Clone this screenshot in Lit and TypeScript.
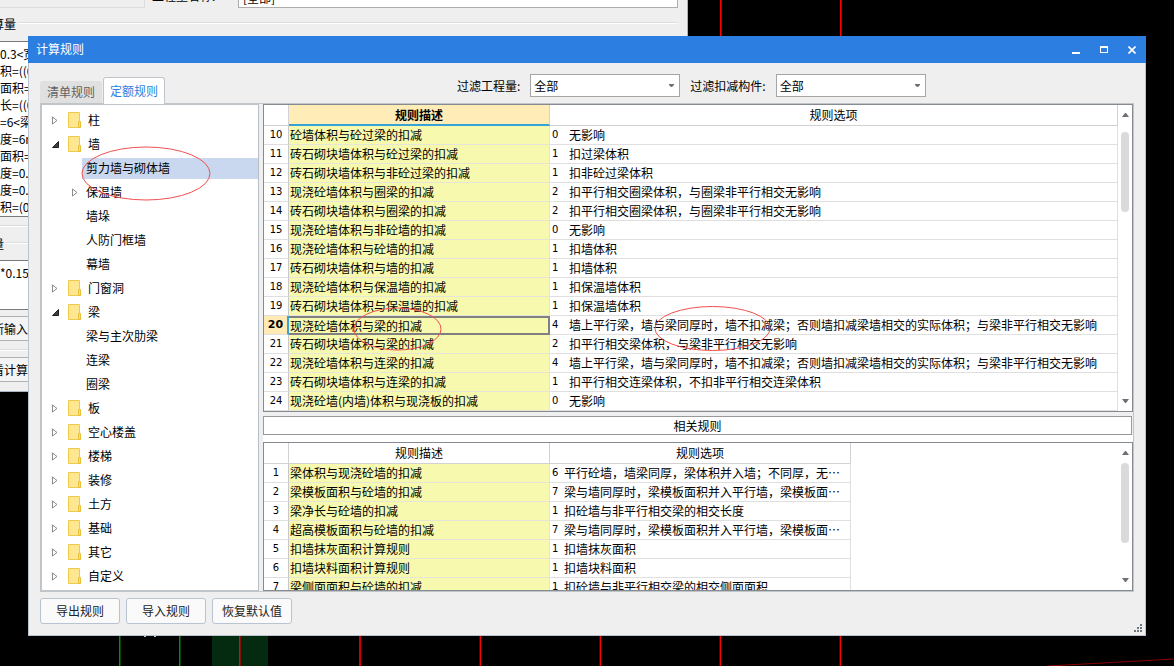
import { LitElement, html, css, svg, nothing } from "lit";
import { customElement, property } from "lit/decorators.js";
import { classMap } from "lit/directives/class-map.js";

interface TreeNode {
  text: string;
  level: 1 | 2;
  state?: "open" | "closed";
  selected?: boolean;
}

interface Rule {
  no: number;
  desc: string;
  code: number;
  option: string;
}

const TREE: TreeNode[] = [
  { text: "柱", level: 1, state: "closed" },
  { text: "墙", level: 1, state: "open" },
  { text: "剪力墙与砌体墙", level: 2, selected: true },
  { text: "保温墙", level: 2, state: "closed" },
  { text: "墙垛", level: 2 },
  { text: "人防门框墙", level: 2 },
  { text: "幕墙", level: 2 },
  { text: "门窗洞", level: 1, state: "closed" },
  { text: "梁", level: 1, state: "open" },
  { text: "梁与主次肋梁", level: 2 },
  { text: "连梁", level: 2 },
  { text: "圈梁", level: 2 },
  { text: "板", level: 1, state: "closed" },
  { text: "空心楼盖", level: 1, state: "closed" },
  { text: "楼梯", level: 1, state: "closed" },
  { text: "装修", level: 1, state: "closed" },
  { text: "土方", level: 1, state: "closed" },
  { text: "基础", level: 1, state: "closed" },
  { text: "其它", level: 1, state: "closed" },
  { text: "自定义", level: 1, state: "closed" },
];

const LONG_BEAM =
  "墙上平行梁，墙与梁同厚时，墙不扣减梁；否则墙扣减梁墙相交的实际体积；与梁非平行相交无影响";

const RULES: Rule[] = [
  { no: 10, desc: "砼墙体积与砼过梁的扣减", code: 0, option: "无影响" },
  { no: 11, desc: "砖石砌块墙体积与砼过梁的扣减", code: 1, option: "扣过梁体积" },
  { no: 12, desc: "砖石砌块墙体积与非砼过梁的扣减", code: 1, option: "扣非砼过梁体积" },
  { no: 13, desc: "现浇砼墙体积与圈梁的扣减", code: 2, option: "扣平行相交圈梁体积，与圈梁非平行相交无影响" },
  { no: 14, desc: "砖石砌块墙体积与圈梁的扣减", code: 2, option: "扣平行相交圈梁体积，与圈梁非平行相交无影响" },
  { no: 15, desc: "现浇砼墙体积与非砼墙的扣减", code: 0, option: "无影响" },
  { no: 16, desc: "现浇砼墙体积与砼墙的扣减", code: 1, option: "扣墙体积" },
  { no: 17, desc: "砖石砌块墙体积与墙的扣减", code: 1, option: "扣墙体积" },
  { no: 18, desc: "现浇砼墙体积与保温墙的扣减", code: 1, option: "扣保温墙体积" },
  { no: 19, desc: "砖石砌块墙体积与保温墙的扣减", code: 1, option: "扣保温墙体积" },
  { no: 20, desc: "现浇砼墙体积与梁的扣减", code: 4, option: LONG_BEAM },
  { no: 21, desc: "砖石砌块墙体积与梁的扣减", code: 2, option: "扣平行相交梁体积，与梁非平行相交无影响" },
  { no: 22, desc: "现浇砼墙体积与连梁的扣减", code: 4, option: LONG_BEAM },
  { no: 23, desc: "砖石砌块墙体积与连梁的扣减", code: 1, option: "扣平行相交连梁体积，不扣非平行相交连梁体积" },
  { no: 24, desc: "现浇砼墙(内墙)体积与现浇板的扣减", code: 0, option: "无影响" },
];

const RELATED: Rule[] = [
  { no: 1, desc: "梁体积与现浇砼墙的扣减", code: 6, option: "平行砼墙，墙梁同厚，梁体积并入墙；不同厚，无…" },
  { no: 2, desc: "梁模板面积与砼墙的扣减", code: 7, option: "梁与墙同厚时，梁模板面积并入平行墙，梁模板面…" },
  { no: 3, desc: "梁净长与砼墙的扣减", code: 1, option: "扣砼墙与非平行相交梁的相交长度" },
  { no: 4, desc: "超高模板面积与砼墙的扣减", code: 7, option: "梁与墙同厚时，梁模板面积并入平行墙，梁模板面…" },
  { no: 5, desc: "扣墙抹灰面积计算规则", code: 1, option: "扣墙抹灰面积" },
  { no: 6, desc: "扣墙块料面积计算规则", code: 1, option: "扣墙块料面积" },
  { no: 7, desc: "梁侧面面积与砼墙的扣减", code: 1, option: "扣砼墙与非平行相交梁的相交侧面面积" },
];

/* Drawing canvas with the axis lines of the plan. */
@customElement("plan-canvas")
export class PlanCanvas extends LitElement {
  static styles = css`
    :host { position: absolute; inset: 0; background: #000; overflow: hidden; }
    svg { display: block; width: 1174px; height: 666px; }
  `;
  render() {
    const top = [720, 840];
    const bottom = [480, 600, 720, 840];
    return html`<svg viewBox="0 0 1174 666" shape-rendering="crispEdges" aria-hidden="true">
      ${top.map((x) => svg`<rect x=${x} y="0" width="1" height="40" fill="#ff0000"/><rect x=${x + 1} y="0" width="1" height="40" fill="#8c0000"/>`)}
      <rect x="119" y="630" width="1" height="36" fill="#0a8a0a"/><rect x="120" y="630" width="1" height="36" fill="#044404"/>
      <rect x="179" y="630" width="1" height="36" fill="#0a8a0a"/><rect x="180" y="630" width="1" height="36" fill="#044404"/>
      <rect x="212" y="630" width="56" height="36" fill="#042a10"/>
      <rect x="239" y="630" width="1" height="36" fill="#c01808"/><rect x="240" y="630" width="1" height="36" fill="#801008"/>
      <rect x="359" y="630" width="2" height="36" fill="#cc0000"/>
      ${bottom.map((x) => svg`<rect x=${x} y="630" width="1" height="36" fill="#ff0000"/><rect x=${x - 1} y="630" width="1" height="36" fill="#600000"/>`)}
      <path d="M144 636h2M154 636h2" stroke="#ccc" stroke-width="2"/>
      <path d="M1048 666L1174 659" stroke="#8c0000" stroke-width="1" shape-rendering="auto"/>
    </svg>`;
  }
}

/* Quantity window that lies behind the rules dialog. */
@customElement("quantity-window")
export class QuantityWindow extends LitElement {
  static styles = css`
    :host {
      position: absolute; left: 0; top: 0; width: 688px; height: 392px; box-sizing: border-box;
      overflow: hidden; background: #efefef; border-right: 1px solid #a8b4c4; border-bottom: 1px solid #a8b4c4;
      font: 12px/17px "Noto Sans CJK SC", sans-serif; color: #000;
    }
    * { box-sizing: border-box; }
    .strip { display: flex; align-items: flex-end; height: 8px; overflow: hidden; }
    .group-end { width: 145px; height: 8px; border: solid #dcdcdc; border-width: 0 1px 1px 0; margin-right: 7px; }
    .strip label { width: 86px; padding-bottom: 4px; white-space: nowrap; }
    .combo { width: 440px; height: 22px; padding: 0 4px; border: 1px solid #adadad; background: #fff; font: inherit; }
    .legend { display: flex; align-items: center; gap: 2px; height: 18px; margin: 6px 10px 0 -8px; }
    .legend.second { margin-top: 7px; }
    .legend::after { content: ""; flex: 1; border-top: 1px solid #dcdcdc; border-bottom: 1px solid #fff; }
    textarea {
      display: block; width: 100%; margin: 9px 0 0; padding: 3px 0 0; border: solid #7a7a7a; border-width: 1px 0;
      background: #fff; font: inherit; color: inherit; resize: none; overflow: hidden; white-space: pre; height: 176px;
    }
    textarea.short { height: 50px; margin-top: 8px; }
    .rule { height: 2px; margin-top: 8px; border-top: 1px solid #dcdcdc; border-bottom: 1px solid #fff; }
    button {
      display: block; width: 120px; height: 25px; margin: 6px 0 0 -20px; padding: 0 0 0 11px; border: 1px solid #adb2b5;
      background: #f4f4f4; font: inherit; color: inherit; text-align: left;
    }
  `;
  render() {
    const lines = ["0.3<宽>*0.5<高>", "积=((0.3<宽>", "面积=((0.3<宽>", "长=((0.3<宽>", "=6<梁净长>", "度=6m", "面积=((0.3", "度=0.3m", "度=0.5m", "积=(0.3*0.5)"];
    return html`
      <div class="strip">
        <div class="group-end"></div>
        <label for="code">工程量名称:</label>
        <input id="code" class="combo" .value=${"[全部]"} />
      </div>
      <div class="legend">算量</div>
      <textarea aria-label="计算量" readonly .value=${lines.join("\n")}></textarea>
      <div class="rule"></div>
      <div class="legend second">量</div>
      <textarea class="short" aria-label="手工量" readonly .value=${"*0.15"}></textarea>
      <button>新输入</button>
      <div class="rule"></div>
      <button>看计算</button>
    `;
  }
}

/* Vertical scroll bar with end arrows. */
@customElement("scroll-rail")
export class ScrollRail extends LitElement {
  static styles = css`
    :host { display: flex; flex-direction: column; align-items: center; width: 14px; flex: none; }
    svg { display: block; flex: none; width: 7px; height: 4px; margin: 8px 0 0 1px; }
    svg.down { margin: auto 0 8px 1px; }
    .thumb { width: 8px; height: 80px; margin-top: 15px; border-radius: 4px; background: #dadada; }
    :host([compact]) .thumb { margin-top: 8px; }
  `;
  render() {
    return html`
      <svg viewBox="0 0 7 4"><path d="M0 4L3 0h1l3 4z" fill="#6e6e78"/></svg>
      <div class="thumb"></div>
      <svg class="down" viewBox="0 0 7 4"><path d="M0 0L3 4h1l3-4z" fill="#6e6e78"/></svg>
    `;
  }
}

@customElement("rule-tree")
export class RuleTree extends LitElement {
  static styles = css`
    :host { display: block; background: #fff; border-top: 1px solid #c0c5ca; border-right: 1px solid #b8bec6; border-bottom: 1px solid #c0c5ca; padding-top: 3px; overflow: hidden; }
    ul { list-style: none; margin: 0; padding: 0; }
    li { display: flex; align-items: center; height: 24px; line-height: 20px; }
    .twist { flex: none; width: 16px; margin-left: 5px; display: flex; justify-content: center; }
    .level2 .twist { width: 15px; margin-left: 25px; }
    .folder { flex: none; width: 14px; height: 16px; margin: 0 1px 0 5px; }
    .label { flex: 1; height: 21px; line-height: 20px; padding-left: 5px; }
    .level2 .label { padding-left: 4px; }
    .selected .label { background: #c9d8ef; }
  `;
  private twist(state?: "open" | "closed") {
    if (state === "closed")
      return html`<svg width="6" height="9" viewBox="0 0 6 9"><path d="M.5 1v7L5 4.500z" fill="#fff" stroke="#8a8a8a"/></svg>`;
    if (state === "open")
      return html`<svg width="7" height="7" viewBox="0 0 7 7"><path d="M6.500.5v6h-6z" fill="#404040" stroke="#202020"/></svg>`;
    return nothing;
  }
  render() {
    return html`<ul role="tree">
      ${TREE.map(
        (n) => html`<li role="treeitem" class=${classMap({ level2: n.level === 2, selected: !!n.selected })}>
          <span class="twist">${this.twist(n.state)}</span>
          ${n.level === 1
            ? html`<svg class="folder" viewBox="0 0 14 16">
                <path d="M.5.5h11v10h1v5H.5z" fill="#ffe690" stroke="#efcb4c"/>
                <path d="M10.500 9.500h2v6h-2z" fill="#ffdf70" stroke="#e6bf3c"/>
              </svg>`
            : nothing}
          <span class="label">${n.text}</span>
        </li>`
      )}
    </ul>`;
  }
}

@customElement("rule-grid")
export class RuleGrid extends LitElement {
  @property({ attribute: false }) rows: Rule[] = [];
  @property({ type: Number }) current = 0;
  @property({ type: Boolean, reflect: true }) compact = false;

  static styles = css`
    :host { display: flex; background: #fff; border: 1px solid #868b92; overflow: hidden; }
    .view { flex: 1; min-width: 0; overflow: hidden; }
    table { width: 100%; table-layout: fixed; border-collapse: separate; border-spacing: 0; }
    .no { width: 25px; }
    .desc { width: 261px; }
    :host([compact]) table { width: 587px; }
    th, td { box-sizing: border-box; height: 19px; padding: 0 2px; border: solid #dfdfdf; border-width: 0 1px 1px 0; line-height: 18px; white-space: nowrap; overflow: hidden; }
    td { padding-left: 1px; }
    thead th { height: 21px; line-height: 20px; font-weight: normal; text-align: center; border-color: #d2d2d2; }
    tbody th { padding: 0; text-align: center; font: 10px/18px "DejaVu Sans", sans-serif; border-right-color: #c8c8c8; }
    .fill { background: #f7faae; border-color: #e6e6d8; }
    .cell { display: flex; align-items: center; height: 18px; padding-left: 1px; }
    .code { flex: none; width: 17px; font: 10px/18px "DejaVu Sans", sans-serif; }
    :host([compact]) .code { width: 12px; }
    thead .active { background: #ffecb6; font-weight: bold; border-bottom: 2px solid #35a3d6; line-height: 19px; }
    .current th { background: #ffe9b4; border-right: 2px solid #35a3d6; font-size: 11px; font-weight: bold; }
    .current .fill { border: 2px solid #808080; border-left-width: 0; line-height: 15px; }
  `;
  render() {
    return html`
      <div class="view">
        <table>
          <colgroup><col class="no" /><col class="desc" /><col /></colgroup>
          <thead>
            <tr>
              <th></th>
              <th class=${classMap({ active: this.current > 0 })}>规则描述</th>
              <th>规则选项</th>
            </tr>
          </thead>
          <tbody>
            ${this.rows.map(
              (r) => html`<tr class=${classMap({ current: r.no === this.current })}>
                <th scope="row">${r.no}</th>
                <td class="fill">${r.desc}</td>
                <td><div class="cell"><span class="code">${r.code}</span><span>${r.option}</span></div></td>
              </tr>`
            )}
          </tbody>
        </table>
      </div>
      <scroll-rail ?compact=${this.compact}></scroll-rail>
    `;
  }
}

@customElement("rules-dialog")
export class RulesDialog extends LitElement {
  static styles = css`
    :host {
      position: absolute; inset: 36px 28px 30px; display: flex; flex-direction: column; box-sizing: border-box;
      background: #efefef; border: solid #b9c4ce; border-width: 0 1px 1px;
      font: 12px/18px "Noto Sans CJK SC", sans-serif; color: #000;
    }
    * { box-sizing: border-box; }
    .title { display: flex; align-items: center; height: 27px; margin: 0 -1px; padding: 0 6px 0 8px; background: #2c7fe1; color: #fff; flex: none; }
    .title h1 { flex: 1; margin: 0; padding-bottom: 1px; font: inherit; }
    .title button { display: flex; align-items: center; justify-content: center; width: 16px; height: 20px; margin-left: 12px; padding: 0; border: 0; background: none; }
    .head { display: flex; align-items: flex-end; height: 40px; padding: 0 11px; flex: none; }
    .tab { width: 62px; height: 22px; padding: 0; border: 0; border-radius: 3px 3px 0 0; background: #e0e0e0; color: #606060; font: inherit; }
    .tab.on { width: 62px; height: 27px; margin: 0 0 -1px 1px; border: 1px solid #c0c5cc; border-bottom: 0; background: #fff; color: #2c7fe1; position: relative; z-index: 1; }
    .filters { display: flex; align-items: center; gap: 10px; margin: 0 0 6px 292px; }
    .pick { display: flex; align-items: center; }
    .pick select { width: 150px; height: 23px; padding: 0 24px 0 3px; border: 1px solid #a5a5a5; border-radius: 0; background: #fff; font: inherit; color: #000; appearance: none; }
    .pick svg { width: 7px; height: 4px; margin-left: -12px; margin-right: 5px; pointer-events: none; }
    .pane { flex: 1; min-height: 0; display: flex; gap: 4px; margin: 0 11px; border: solid #bfc5c9; border-width: 1px 1px 1px 2px; }
    rule-tree { flex: none; width: 217px; }
    .right { flex: 1; min-width: 0; display: flex; flex-direction: column; }
    .main { flex: none; }
    .related-head { margin: 4px 1px 0 0; height: 19px; flex: none; border: 1px solid #999; background: #fff; text-align: center; line-height: 17px; }
    .related { flex: 1; min-height: 0; display: flex; padding-top: 7px; background: #fff; }
    .related rule-grid { flex: 1; min-width: 0; }
    .foot { display: flex; gap: 6px; padding: 6px 11px 11px; flex: none; }
    .foot button { width: 80px; height: 26px; padding: 0; border: 1px solid #b9c4d3; border-radius: 3px; background: #fafafa; color: #222; font: inherit; }
    .grip { margin: auto -9px -9px auto; width: 9px; height: 9px; }
  `;
  render() {
    const arrow = html`<svg viewBox="0 0 7 4"><path d="M1 0h5v1L4 3H3L1 1z" fill="#707070"/></svg>`;
    return html`
      <div class="title">
        <h1>计算规则</h1>
        <button aria-label="最小化"><svg width="8" height="8"><path d="M0 6h8v2H0z" fill="#fff"/></svg></button>
        <button aria-label="最大化"><svg width="8" height="7"><path d="M0 0h8v7H0zM1 2v4h6V2z" fill="#fff" fill-rule="evenodd"/></svg></button>
        <button aria-label="关闭"><svg width="8" height="8" viewBox="0 0 8 8"><path d="M.5.5l7 7M7.500.5l-7 7" stroke="#fff" stroke-width="1.600"/></svg></button>
      </div>
      <div class="head">
        <button class="tab">清单规则</button>
        <button class="tab on">定额规则</button>
        <div class="filters">
          <label for="q">过滤工程量:</label>
          <span class="pick"><select id="q"><option>全部</option></select>${arrow}</span>
          <label for="c">过滤扣减构件:</label>
          <span class="pick"><select id="c"><option>全部</option></select>${arrow}</span>
        </div>
      </div>
      <div class="pane">
        <rule-tree></rule-tree>
        <div class="right">
          <rule-grid class="main" .rows=${RULES} current="20"></rule-grid>
          <div class="related-head">相关规则</div>
          <div class="related"><rule-grid compact .rows=${RELATED}></rule-grid></div>
        </div>
      </div>
      <div class="foot">
        <button>导出规则</button>
        <button>导入规则</button>
        <button>恢复默认值</button>
        <svg class="grip" viewBox="0 0 9 9"><path d="M6 0h2v2H6zM3 3h2v2H3zM6 3h2v2H6zM0 6h2v2H0zM3 6h2v2H3zM6 6h2v2H6z" fill="#6e7480"/></svg>
      </div>
    `;
  }
}

@customElement("app-root")
export class AppRoot extends LitElement {
  static styles = css`
    :host { display: block; position: relative; height: 100vh; overflow: hidden; }
    .marks { position: absolute; left: 0; top: 0; width: 1174px; height: 666px; pointer-events: none; }
  `;
  render() {
    return html`
      <plan-canvas></plan-canvas>
      <quantity-window></quantity-window>
      <rules-dialog></rules-dialog>
      <svg class="marks" viewBox="0 0 1174 666" fill="none" stroke="#f25050" aria-hidden="true">
        <ellipse cx="146" cy="173.500" rx="64" ry="26.500"/>
        <ellipse cx="397.500" cy="329" rx="43.500" ry="21"/>
        <ellipse cx="712.500" cy="328.500" rx="57.500" ry="22"/>
      </svg>
    `;
  }
}
